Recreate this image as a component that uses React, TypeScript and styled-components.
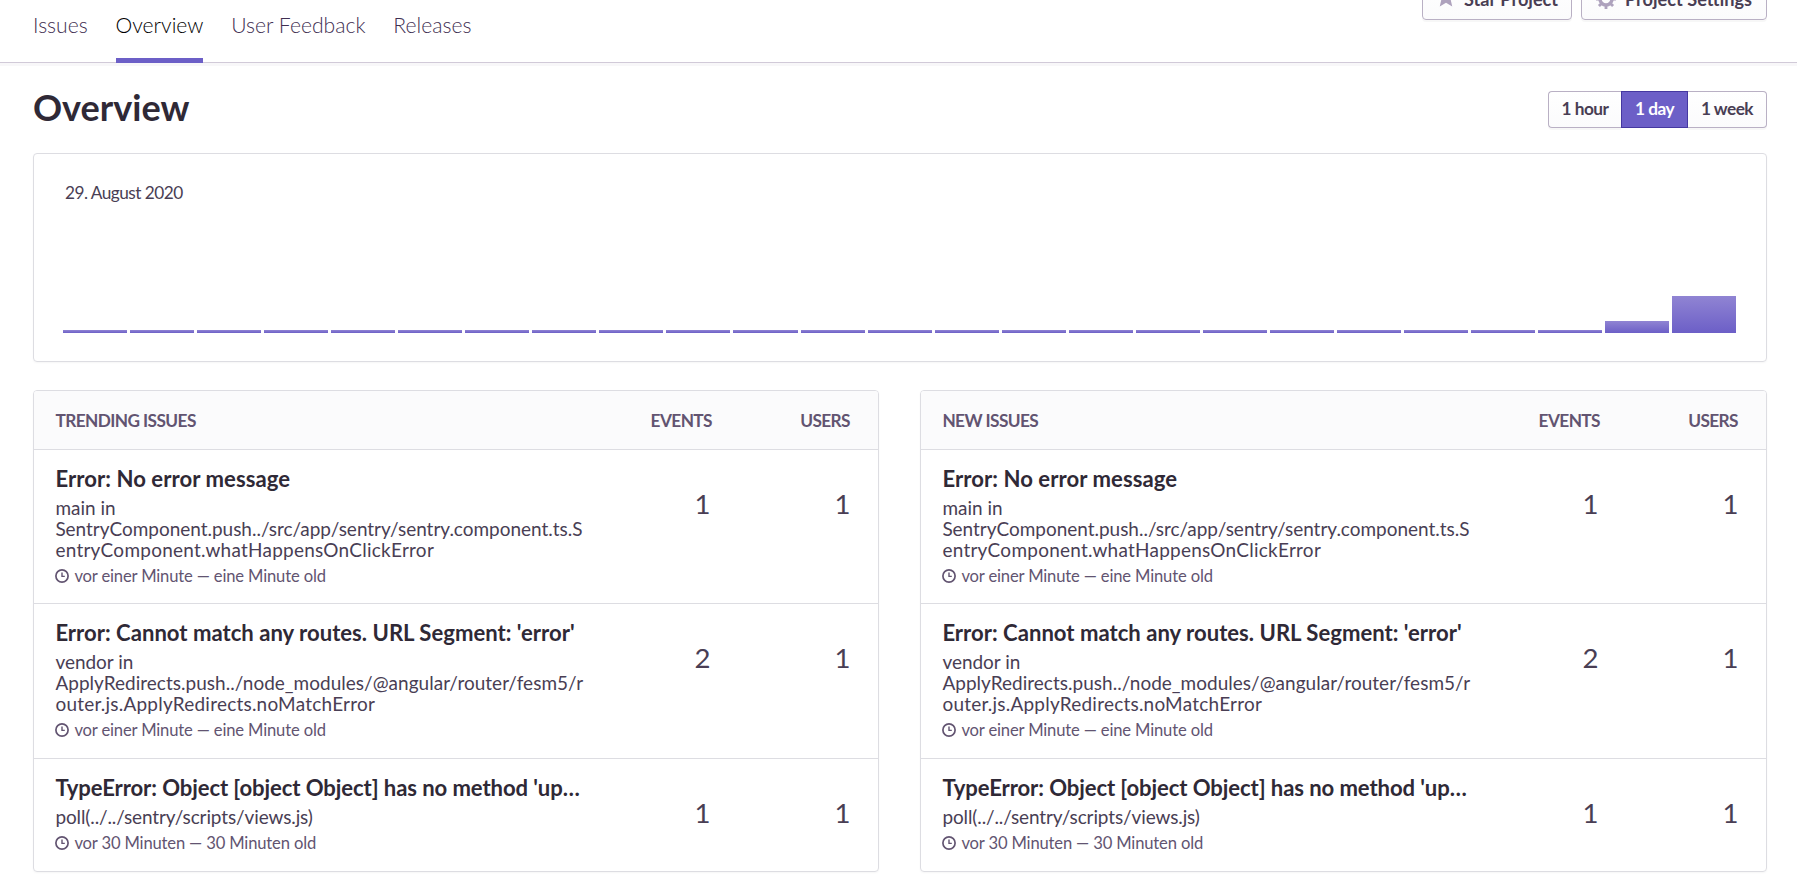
import React from 'react';
import styled, { createGlobalStyle, css } from 'styled-components';

const GlobalStyle = createGlobalStyle`
  *, *::before, *::after { box-sizing: border-box; }
  html { overflow: hidden; }
  body {
    margin: 0;
    background: #fff;
    color: #493e54;
    font-family: Lato, 'Liberation Sans', sans-serif;
    font-size: 17.25px;
    font-variant-ligatures: no-common-ligatures;
  }
  h1, p { margin: 0; }
`;

const Page = styled.div`
  height: 882px;
  overflow: hidden;
`;

const Header = styled.header`
  display: flex;
  justify-content: space-between;
  height: 63px;
  padding: 0 30px 0 33px;
  border-bottom: 1px solid #d1cad8;
  box-shadow: 0 3px 0 rgba(37, 11, 54, 0.03);
`;

const Tabs = styled.nav`
  display: flex;
  gap: 27.8px;
  height: 63px;
`;

const Tab = styled.a<{ $active?: boolean }>`
  height: 63px;
  padding-top: 12px;
  line-height: 26px;
  font-size: 21.15px;
  font-weight: 300;
  color: #3f2f52;
  ${(p) => p.$active && css`
    color: #000;
    border-bottom: 5px solid #6c5fc7;
  `}
`;

const HeaderActions = styled.div`
  display: flex;
  align-items: flex-start;
  gap: 9px;
  margin-top: -22px;
`;

const buttonFace = css`
  background: linear-gradient(#fff, #fbfbfc);
  border: 1px solid #b9b0c4;
  box-shadow: 0 2px 0 rgba(0, 0, 0, 0.03);
  font-family: inherit;
  font-weight: 700;
  color: #493e54;
`;

const ActionButton = styled.button<{ $width: number }>`
  ${buttonFace}
  display: flex;
  align-items: center;
  gap: 9px;
  width: ${(p) => p.$width}px;
  height: 42px;
  padding: 0 0 0 14px;
  border-radius: 4px;
  font-size: 18.15px;
  white-space: nowrap;
  svg { flex: none; overflow: visible; }
`;

const TitleBar = styled.div`
  display: flex;
  justify-content: space-between;
  align-items: center;
  height: 90px;
  padding: 2px 30px 0 33px;
`;

const Title = styled.h1`
  font-size: 36.1px;
  line-height: 40px;
  padding-bottom: 4px;
  font-weight: 700;
  color: #2f2936;
`;

const Segments = styled.div`
  display: flex;
  height: 37px;
`;

const Segment = styled.button<{ $width: number; $active?: boolean }>`
  ${buttonFace}
  width: ${(p) => p.$width}px;
  padding: 0 0 1px;
  font-size: 17.25px;
  letter-spacing: -0.5px;
  text-align: center;
  &:first-child { border-radius: 4px 0 0 4px; border-right: 0; }
  &:last-child { border-radius: 0 4px 4px 0; border-left: 0; }
  ${(p) => p.$active && css`
    background: #6c5fc7;
    border-color: #4538a1;
    box-shadow: none;
    color: #fff;
  `}
`;

const panel = css`
  border: 1px solid #dddde2;
  border-radius: 4px;
  box-shadow: 0 1px 2px rgba(0, 0, 0, 0.04);
`;

const ChartPanel = styled.section`
  ${panel}
  display: flex;
  flex-direction: column;
  justify-content: space-between;
  height: 209px;
  margin: 0 30px 28px 33px;
  padding: 28px 30px 28px 29px;
`;

const ChartDate = styled.p`
  padding-left: 2px;
  line-height: 22px;
  letter-spacing: -0.53px;
`;

const Bars = styled.div`
  display: flex;
  align-items: flex-end;
  gap: 3px;
`;

const Bar = styled.div`
  flex: 1;
  background: linear-gradient(#9084d3, #6c5fc7);
`;

const Columns = styled.div`
  display: grid;
  grid-template-columns: 846px 847px;
  justify-content: space-between;
  padding: 0 30px 0 33px;
`;

const IssuePanel = styled.section`
  ${panel}
  overflow: hidden;
`;

const PanelHead = styled.header`
  display: flex;
  align-items: center;
  height: 58px;
  padding: 1px 28px 0 21.4px;
  background: #fbfbfc;
  color: #625471;
  font-weight: 700;
  letter-spacing: -0.58px;
`;

const HeadLabel = styled.span<{ $width?: number }>`
  flex: ${(p) => (p.$width ? 'none' : 1)};
  width: ${(p) => (p.$width ? `${p.$width}px` : 'auto')};
  text-align: ${(p) => (p.$width ? 'right' : 'left')};
`;

const IssueRow = styled.article<{ $height: number }>`
  display: flex;
  height: ${(p) => p.$height}px;
  padding: 15px 27.500px 0 21.4px;
  border-top: 1px solid #dddde2;
`;

const IssueText = styled.div`
  width: 529px;
  margin-right: auto;
`;

const IssueTitle = styled.p<{ $tracking: number }>`
  line-height: 28px;
  font-size: 22.1px;
  font-weight: 700;
  letter-spacing: ${(p) => p.$tracking}px;
  color: #2f2936;
  white-space: nowrap;
`;

const IssuePath = styled.p`
  margin-top: 4px;
  line-height: 21.1px;
  font-size: 18.97px;
  white-space: nowrap;
`;

const PathLine = styled.span<{ $tracking: number }>`
  display: block;
  letter-spacing: ${(p) => p.$tracking}px;
`;

const IssueMeta = styled.p`
  display: flex;
  align-items: center;
  gap: 5px;
  margin-top: 5px;
  line-height: 22px;
  font-size: 16.6px;
  letter-spacing: -0.16px;
  color: #625471;
`;

const Count = styled.span<{ $width: number }>`
  width: ${(p) => p.$width}px;
  padding-top: 22px;
  line-height: 34px;
  font-size: 27.6px;
  text-align: right;
`;

const ClockIcon = () => (
  <svg width="14" height="14" viewBox="0 0 14 14" fill="none" stroke="#625471" strokeWidth="1.7">
    <circle cx="7" cy="7" r="6.1" />
    <path d="M7 3.6V7.4H9.8" strokeWidth="1.4" />
  </svg>
);

const StarIcon = () => (
  <svg width="18" height="24" viewBox="0.8 0 14.4 19.2" fill="#aea2bd">
    <path d="M8 0l2.2 5.2 5.8.5-4.4 3.8L13 15.6 8 12.5 3 15.6l1.4-6.1L0 5.7l5.800-.5z" />
  </svg>
);

const GearIcon = () => (
  <svg width="20" height="20" viewBox="0 0 20 20" fill="none" stroke="#aea2bd">
    <circle cx="10" cy="10" r="6" strokeWidth="3.4" />
    <path
      d="M10 0v3M10 17v3M0 10h3M17 10h3M2.930 2.930l2.120 2.120M14.950 14.950l2.120 2.120M2.930 17.070l2.120-2.120M14.950 5.050l2.120-2.120"
      strokeWidth="2.800"
    />
  </svg>
);

const barHeights = [...Array(23).fill(3), 12, 37];

type Line = { text: string; tracking: number };

type Issue = {
  title: Line;
  path: Line[];
  age: string;
  events: number;
  users: number;
  height: number;
};

const issues: Issue[] = [
  {
    title: { text: 'Error: No error message', tracking: 0.06 },
    path: [
      { text: 'main in', tracking: 0 },
      { text: 'SentryComponent.push../src/app/sentry/sentry.component.ts.S', tracking: 0 },
      { text: 'entryComponent.whatHappensOnClickError', tracking: 0.27 },
    ],
    age: 'vor einer Minute — eine Minute old',
    events: 1,
    users: 1,
    height: 154,
  },
  {
    title: { text: "Error: Cannot match any routes. URL Segment: 'error'", tracking: 0.01 },
    path: [
      { text: 'vendor in', tracking: 0 },
      { text: 'ApplyRedirects.push../node_modules/@angular/router/fesm5/r', tracking: 0.04 },
      { text: 'outer.js.ApplyRedirects.noMatchError', tracking: 0.24 },
    ],
    age: 'vor einer Minute — eine Minute old',
    events: 2,
    users: 1,
    height: 155,
  },
  {
    title: { text: "TypeError: Object [object Object] has no method 'up…", tracking: -0.09 },
    path: [{ text: 'poll(../../sentry/scripts/views.js)', tracking: -0.1 }],
    age: 'vor 30 Minuten — 30 Minuten old',
    events: 1,
    users: 1,
    height: 113,
  },
];

const IssueList = ({ heading }: { heading: string }) => (
  <IssuePanel>
    <PanelHead>
      <HeadLabel>{heading}</HeadLabel>
      <HeadLabel $width={100}>EVENTS</HeadLabel>
      <HeadLabel $width={138}>USERS</HeadLabel>
    </PanelHead>
    {issues.map((issue) => (
      <IssueRow key={issue.title.text} $height={issue.height}>
        <IssueText>
          <IssueTitle $tracking={issue.title.tracking}>{issue.title.text}</IssueTitle>
          <IssuePath>
            {issue.path.map((line) => (
              <PathLine key={line.text} $tracking={line.tracking}>
                {line.text}
              </PathLine>
            ))}
          </IssuePath>
          <IssueMeta>
            <ClockIcon />
            {issue.age}
          </IssueMeta>
        </IssueText>
        <Count $width={100}>{issue.events}</Count>
        <Count $width={140}>{issue.users}</Count>
      </IssueRow>
    ))}
  </IssuePanel>
);

export default function App() {
  return (
    <Page>
      <GlobalStyle />
      <Header>
        <Tabs>
          <Tab>Issues</Tab>
          <Tab $active>Overview</Tab>
          <Tab>User Feedback</Tab>
          <Tab>Releases</Tab>
        </Tabs>
        <HeaderActions>
          <ActionButton $width={150}>
            <StarIcon />
            Star Project
          </ActionButton>
          <ActionButton $width={186}>
            <GearIcon />
            Project Settings
          </ActionButton>
        </HeaderActions>
      </Header>
      <TitleBar>
        <Title>Overview</Title>
        <Segments>
          <Segment $width={73}>1 hour</Segment>
          <Segment $width={67} $active>1 day</Segment>
          <Segment $width={79}>1 week</Segment>
        </Segments>
      </TitleBar>
      <ChartPanel>
        <ChartDate>29. August 2020</ChartDate>
        <Bars>
          {barHeights.map((height, i) => (
            <Bar key={i} style={{ height }} />
          ))}
        </Bars>
      </ChartPanel>
      <Columns>
        <IssueList heading="TRENDING ISSUES" />
        <IssueList heading="NEW ISSUES" />
      </Columns>
    </Page>
  );
}
